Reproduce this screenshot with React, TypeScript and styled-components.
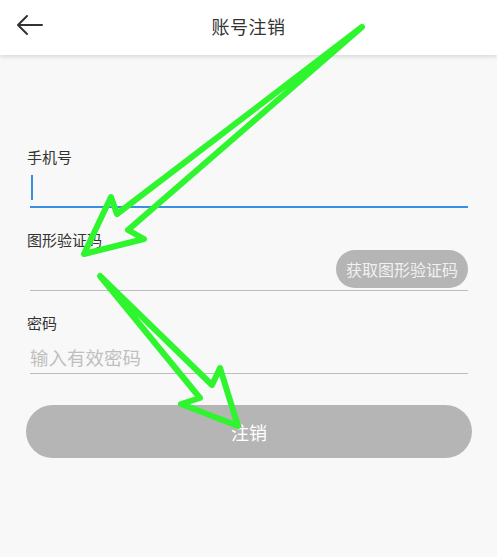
import React from "react";
import styled, { createGlobalStyle } from "styled-components";

const GlobalStyle = createGlobalStyle`
  html, body {
    margin: 0;
    padding: 0;
    background: #f8f8f8;
  }
  body {
    font-family: "Noto Sans CJK SC", "Noto Sans", sans-serif;
  }
  * {
    box-sizing: border-box;
  }
`;

const Page = styled.div`
  position: relative;
  width: 497px;
  height: 557px;
  background: #f8f8f8;
  overflow: hidden;
`;

const Header = styled.header`
  position: relative;
  height: 55px;
  background: #ffffff;
  display: flex;
  align-items: center;
  justify-content: center;
  box-shadow: 0 2px 4px rgba(0, 0, 0, 0.12);

  .back {
    position: absolute;
    left: 16px;
    top: 14px;
    width: 28px;
    height: 22px;
    display: flex;
  }

  h1 {
    margin: 0;
    font-size: 18px;
    font-weight: 400;
    color: #333333;
    letter-spacing: 0.5px;
    line-height: 1;
    margin-top: -4px;
  }
`;

const Form = styled.main`
  display: flex;
  flex-direction: column;
  padding: 92px 29px 0 27px;
`;

const Field = styled.div`
  display: flex;
  flex-direction: column;
  margin-bottom: 22px;
`;

const Label = styled.label`
  font-size: 15px;
  line-height: 20px;
  color: #333333;
`;

const InputRow = styled.div<{ $active?: boolean }>`
  display: flex;
  align-items: center;
  justify-content: space-between;
  height: 41px;
  margin-left: 3px;
  border-bottom: ${(p) => (p.$active ? "2px solid #3a8ee6" : "1.5px solid #bdbdbd")};
`;

const Caret = styled.span`
  display: block;
  width: 2px;
  height: 25px;
  margin-left: 1px;
  margin-top: 2px;
  background: #3a8ee6;
`;

const Placeholder = styled.span`
  font-size: 18.5px;
  color: #bfbfbf;
  margin-top: 8px;
`;

const CaptchaButton = styled.button`
  align-self: flex-start;
  height: 38px;
  padding: 0 10px;
  border: none;
  border-radius: 19px;
  background: #b5b5b5;
  color: #f1f1f1;
  font-family: inherit;
  font-size: 16px;
`;

const SubmitButton = styled.button`
  height: 53px;
  margin: 9px -4px 0 -1px;
  border: none;
  border-radius: 27px;
  background: #b5b5b5;
  color: #ffffff;
  font-family: inherit;
  font-size: 18px;
  padding-top: 2px;
`;

const Annotation = styled.svg`
  position: absolute;
  left: 0;
  top: 0;
  width: 497px;
  height: 557px;
  pointer-events: none;

  polygon {
    fill: none;
    stroke: #2ef52e;
    stroke-width: 6;
    stroke-linejoin: round;
    stroke-linecap: round;
  }
`;

function App() {
  return (
    <Page>
      <GlobalStyle />
      <Header>
        <span className="back">
          <svg width="28" height="22" viewBox="0 0 28 22">
            <path
              d="M26 11 H3 M11 2 L2 11 L11 20"
              fill="none"
              stroke="#333"
              strokeWidth="2"
              strokeLinecap="round"
              strokeLinejoin="round"
            />
          </svg>
        </span>
        <h1>账号注销</h1>
      </Header>
      <Form>
        <Field>
          <Label>手机号</Label>
          <InputRow $active>
            <Caret />
          </InputRow>
        </Field>
        <Field>
          <Label>图形验证码</Label>
          <InputRow>
            <span />
            <CaptchaButton>获取图形验证码</CaptchaButton>
          </InputRow>
        </Field>
        <Field>
          <Label>密码</Label>
          <InputRow>
            <Placeholder>输入有效密码</Placeholder>
          </InputRow>
        </Field>
        <SubmitButton>注销</SubmitButton>
      </Form>
      <Annotation viewBox="0 0 497 557">
        <polygon points="362,27 117,214 111,197 84,254 144,239 128,230" />
        <polygon points="100,276 200,398 181,404 238,426 220,368 212,385" />
      </Annotation>
    </Page>
  );
}

export default App;
